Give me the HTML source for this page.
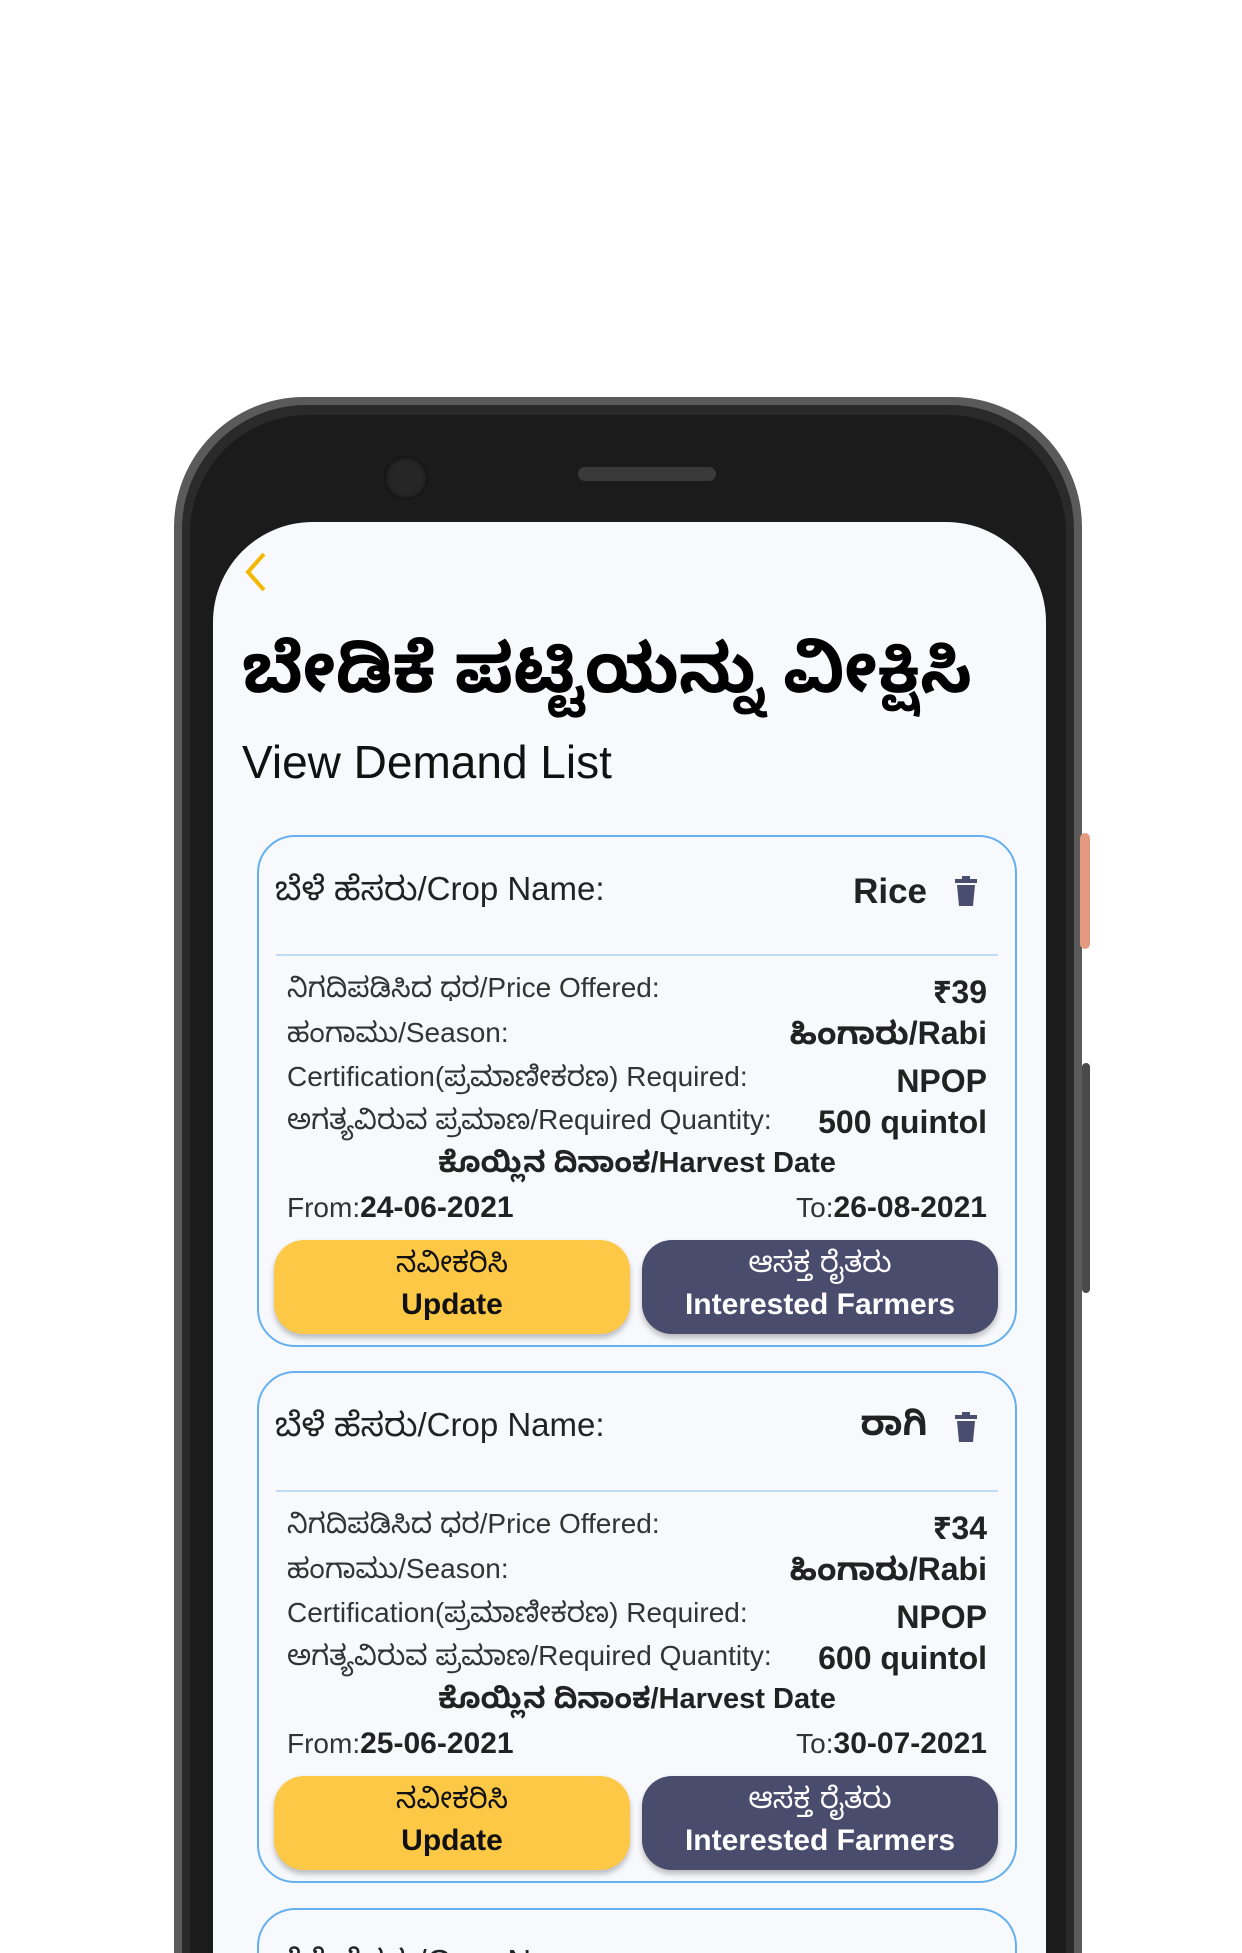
<!DOCTYPE html>
<html><head><meta charset="utf-8"><style>
*{margin:0;padding:0;box-sizing:border-box}
html,body{width:1242px;height:1953px;overflow:hidden;background:#fff}
#wrap{position:relative;width:1242px;height:1953px;overflow:hidden;background:#fff;font-family:"Liberation Sans","Noto Sans Kannada",sans-serif}
.abs{position:absolute}
.frame{left:174px;top:397px;width:908px;height:1556px;background:#5a5a5a;border-radius:130px 130px 0 0}
.frame2{left:182px;top:405px;width:892px;height:1548px;background:#2a2a2a;border-radius:124px 124px 0 0}
.frame3{left:190px;top:415px;width:876px;height:1538px;background:#1b1b1b;border-radius:118px 118px 0 0}
.screen{left:213px;top:522px;width:833px;height:1431px;background:#f8f9fd;border-radius:100px 100px 0 0}
.card{left:257px;width:760px;height:512px;border:2px solid #64b0f0;border-radius:38px;background:#f8f9fd}
.t{position:absolute;color:#222;white-space:nowrap}
.lab{font-size:28px;color:#333}
.val{font-size:32px;font-weight:bold;color:#222;text-align:right}
.btn{position:absolute;top:403px;height:94px;width:356px;border-radius:30px;box-shadow:0 4px 6px rgba(0,0,0,.25);text-align:center;font-size:29px;line-height:42px;padding-top:2px}
.btn b{font-size:30px}
</style></head><body><div id="wrap">
<div class="abs frame"></div>
<div class="abs frame2"></div>
<div class="abs frame3"></div>
<div class="abs" style="left:1080px;top:833px;width:10px;height:116px;background:#e39a80;border-radius:5px"></div>
<div class="abs" style="left:1082px;top:1063px;width:8px;height:230px;background:#4a4a4a;border-radius:4px"></div>
<div class="abs" style="left:384px;top:456px;width:44px;height:44px;border-radius:50%;background:#262626;box-shadow:inset 0 0 6px #000"></div>
<div class="abs" style="left:578px;top:467px;width:138px;height:14px;border-radius:7px;background:#3a3a3a"></div>
<div class="abs screen"></div>
<svg class="abs" style="left:240px;top:550px" width="30" height="44" viewBox="0 0 30 44"><path d="M24 4 L8 22 L24 40" stroke="#f5b800" stroke-width="4" fill="none"/></svg>
<div class="t" style="left:242px;top:630px;font-size:68px;font-weight:bold;color:#000">ಬೇಡಿಕೆ ಪಟ್ಟಿಯನ್ನು ವೀಕ್ಷಿಸಿ</div>
<div class="t" style="left:242px;top:735px;font-size:46px;color:#111">View Demand List</div>

<div class="abs card" style="top:835px">
 <div class="t" style="left:16px;top:33px;font-size:33px;color:#222">ಬೆಳೆ ಹೆಸರು/Crop Name:</div>
 <div class="t val" style="right:88px;top:35px;font-size:35px">Rice</div>
 <svg class="abs" style="left:694px;top:38px" width="26" height="32" viewBox="0 0 26 32"><rect x="2" y="4" width="22" height="4" fill="#4a4e6e"/><rect x="9" y="1" width="8" height="4" fill="#4a4e6e"/><path d="M4 10 H22 L20 31 H6 Z" fill="#4a4e6e"/></svg>
 <div class="abs" style="left:17px;top:117px;width:722px;height:2px;background:#bfdcf5"></div>
 <div class="t lab" style="left:28px;top:135px">ನಿಗದಿಪಡಿಸಿದ ಧರ/Price Offered:</div>
 <div class="t val" style="right:28px;top:137px">₹39</div>
 <div class="t lab" style="left:28px;top:180px">ಹಂಗಾಮು/Season:</div>
 <div class="t val" style="right:28px;top:178px">ಹಿಂಗಾರು/Rabi</div>
 <div class="t lab" style="left:28px;top:224px">Certification(ಪ್ರಮಾಣೀಕರಣ) Required:</div>
 <div class="t val" style="right:28px;top:226px">NPOP</div>
 <div class="t lab" style="left:28px;top:267px">ಅಗತ್ಯವಿರುವ ಪ್ರಮಾಣ/Required Quantity:</div>
 <div class="t val" style="right:28px;top:267px">500 quintol</div>
 <div class="t" style="left:0;right:0;text-align:center;top:310px;font-size:29px;font-weight:bold">ಕೊಯ್ಲಿನ ದಿನಾಂಕ/Harvest Date</div>
 <div class="t lab" style="left:28px;top:354px">From:<b style="color:#222;font-size:30px">24-06-2021</b></div>
 <div class="t lab" style="right:28px;top:354px">To:<b style="color:#222;font-size:30px">26-08-2021</b></div>
 <div class="btn" style="left:15px;background:#fcc846;color:#111">ನವೀಕರಿಸಿ<br><b>Update</b></div>
 <div class="btn" style="left:383px;background:#4a4c6e;color:#fff">ಆಸಕ್ತ ರೈತರು<br><b>Interested Farmers</b></div>
</div>

<div class="abs card" style="top:1371px">
 <div class="t" style="left:16px;top:33px;font-size:33px;color:#222">ಬೆಳೆ ಹೆಸರು/Crop Name:</div>
 <div class="t val" style="right:88px;top:31px;font-size:35px">ರಾಗಿ</div>
 <svg class="abs" style="left:694px;top:38px" width="26" height="32" viewBox="0 0 26 32"><rect x="2" y="4" width="22" height="4" fill="#4a4e6e"/><rect x="9" y="1" width="8" height="4" fill="#4a4e6e"/><path d="M4 10 H22 L20 31 H6 Z" fill="#4a4e6e"/></svg>
 <div class="abs" style="left:17px;top:117px;width:722px;height:2px;background:#bfdcf5"></div>
 <div class="t lab" style="left:28px;top:135px">ನಿಗದಿಪಡಿಸಿದ ಧರ/Price Offered:</div>
 <div class="t val" style="right:28px;top:137px">₹34</div>
 <div class="t lab" style="left:28px;top:180px">ಹಂಗಾಮು/Season:</div>
 <div class="t val" style="right:28px;top:178px">ಹಿಂಗಾರು/Rabi</div>
 <div class="t lab" style="left:28px;top:224px">Certification(ಪ್ರಮಾಣೀಕರಣ) Required:</div>
 <div class="t val" style="right:28px;top:226px">NPOP</div>
 <div class="t lab" style="left:28px;top:267px">ಅಗತ್ಯವಿರುವ ಪ್ರಮಾಣ/Required Quantity:</div>
 <div class="t val" style="right:28px;top:267px">600 quintol</div>
 <div class="t" style="left:0;right:0;text-align:center;top:310px;font-size:29px;font-weight:bold">ಕೊಯ್ಲಿನ ದಿನಾಂಕ/Harvest Date</div>
 <div class="t lab" style="left:28px;top:354px">From:<b style="color:#222;font-size:30px">25-06-2021</b></div>
 <div class="t lab" style="right:28px;top:354px">To:<b style="color:#222;font-size:30px">30-07-2021</b></div>
 <div class="btn" style="left:15px;background:#fcc846;color:#111">ನವೀಕರಿಸಿ<br><b>Update</b></div>
 <div class="btn" style="left:383px;background:#4a4c6e;color:#fff">ಆಸಕ್ತ ರೈತರು<br><b>Interested Farmers</b></div>
</div>

<div class="abs card" style="top:1908px;height:45px;border-bottom:none;border-radius:38px 38px 0 0;overflow:hidden">
 <div class="t" style="left:16px;top:33px;font-size:33px;color:#222">ಬೆಳೆ ಹೆಸರು/Crop Name:</div>
</div>
</div></body></html>
